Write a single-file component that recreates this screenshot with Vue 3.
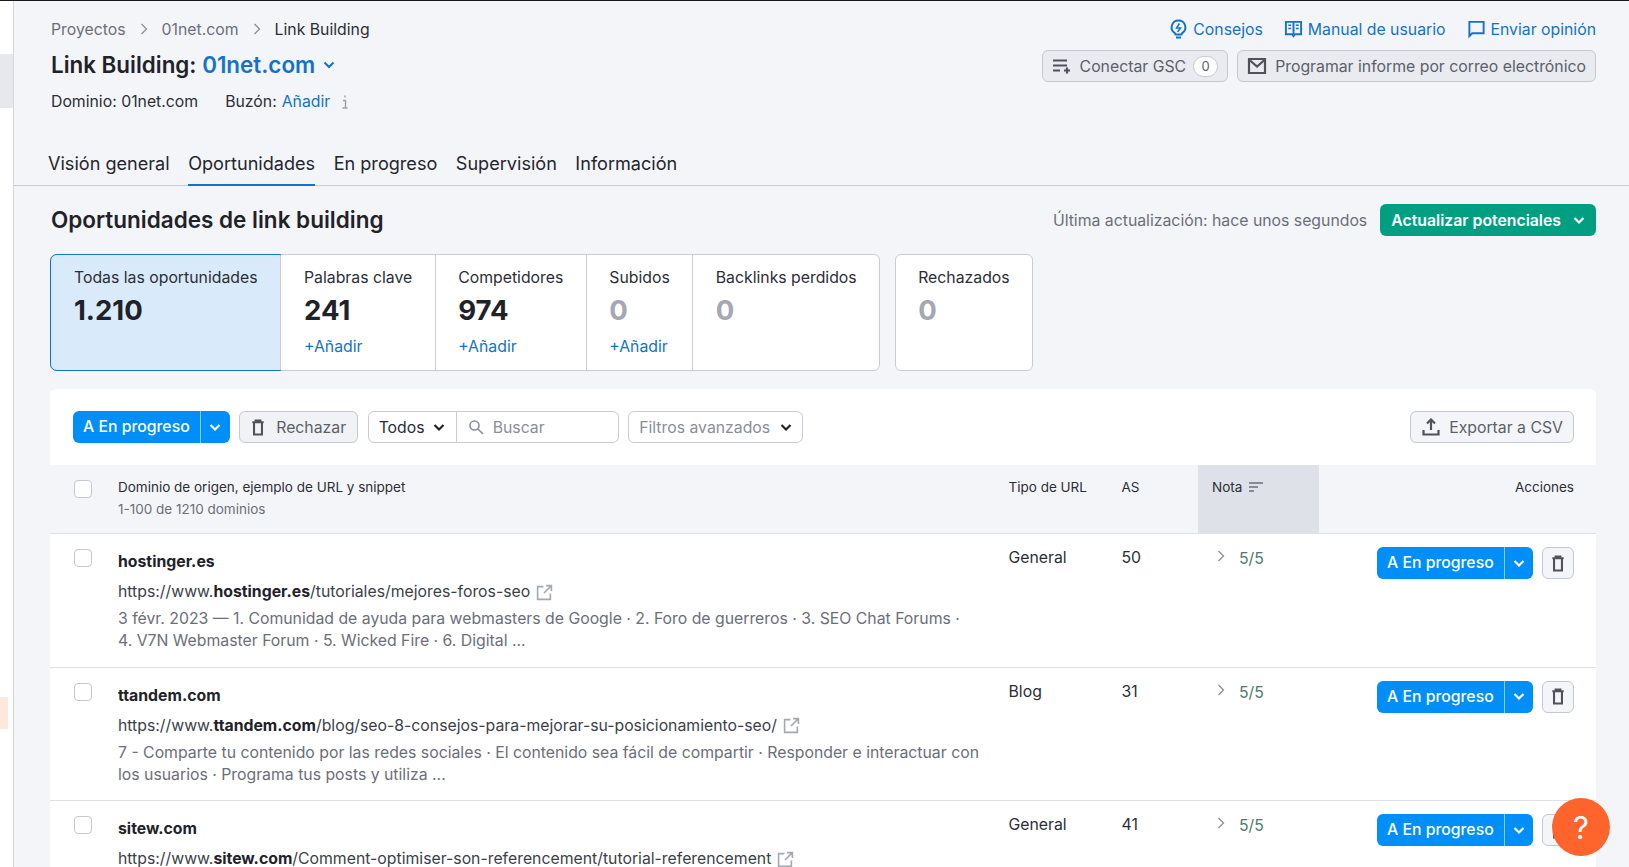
<script setup>
const rows = [
  { name: 'hostinger.es', pre: 'https://www.', bold: 'hostinger.es', post: '/tutoriales/mejores-foros-seo', lines: ['3 févr. 2023 — 1. Comunidad de ayuda para webmasters de Google · 2. Foro de guerreros · 3. SEO Chat Forums ·', '4. V7N Webmaster Forum · 5. Wicked Fire · 6. Digital ...'], type: 'General', as: 50 },
  { name: 'ttandem.com', pre: 'https://www.', bold: 'ttandem.com', post: '/blog/seo-8-consejos-para-mejorar-su-posicionamiento-seo/', lines: ['7 - Comparte tu contenido por las redes sociales · El contenido sea fácil de compartir · Responder e interactuar con', 'los usuarios · Programa tus posts y utiliza ...'], type: 'Blog', as: 31 },
  { name: 'sitew.com', pre: 'https://www.', bold: 'sitew.com', post: '/Comment-optimiser-son-referencement/tutorial-referencement', lines: [], type: 'General', as: 41 },
]
const tabs = ['Visión general', 'Oportunidades', 'En progreso', 'Supervisión', 'Información']
const cards = [
  { label: 'Todas las oportunidades', value: '1.210', active: true },
  { label: 'Palabras clave', value: '241', add: true },
  { label: 'Competidores', value: '974', add: true },
  { label: 'Subidos', value: '0', add: true, zero: true },
  { label: 'Backlinks perdidos', value: '0', zero: true },
]
</script>

<template>
  <div class="page">
    <aside class="rail">
      <div class="rail-block"></div>
      <div class="rail-mark"></div>
    </aside>
    <main class="main">
      <header class="head">
        <div class="head-top">
          <div>
            <nav class="crumbs">
              <span>Proyectos</span>
              <svg class="crumb-sep" viewBox="0 0 8 12"><path d="M1.5 1l5 5-5 5" /></svg>
              <span>01net.com</span>
              <svg class="crumb-sep" viewBox="0 0 8 12"><path d="M1.5 1l5 5-5 5" /></svg>
              <span class="crumb-cur">Link Building</span>
            </nav>
            <h1 class="title">Link Building: <span class="title-link">01net.com</span>
              <svg class="title-caret" viewBox="0 0 12 8"><path d="M1.5 1.5L6 6l4.5-4.5" /></svg>
            </h1>
            <div class="meta">
              <span>Dominio: 01net.com</span>
              <span class="meta-box">Buzón: <a class="link">Añadir</a>
                <svg class="info" viewBox="0 0 8 16"><path d="M4 1.5v2M2 6.5h2.5v7M1.5 14h5" /></svg>
              </span>
            </div>
          </div>
          <div class="head-right">
            <div class="help-links">
              <a class="help-link">
                <svg viewBox="0 0 18 20" class="ico-link"><path d="M9 1.5a6.8 6.8 0 0 0-3.6 12.6l.6 1.4h6l.6-1.4A6.8 6.8 0 0 0 9 1.5z" /><path d="M6.5 18.5h5" /><path class="thin" d="M10 4.5L7 9h4l-3 4" /></svg>
                Consejos
              </a>
              <a class="help-link">
                <svg viewBox="0 0 20 20" class="ico-link"><path d="M2 2.5h16v13h-6.5L10 17.5l-1.5-2H2z" /><path d="M10 3v12.5" /><path class="thin" d="M4.5 6h3M4.5 9.5h3M12.5 6h3M12.5 9.5h3" /></svg>
                Manual de usuario
              </a>
              <a class="help-link">
                <svg viewBox="0 0 20 20" class="ico-link"><path d="M2.5 17.5v-15h15v12h-12z" /></svg>
                Enviar opinión
              </a>
            </div>
            <div class="head-btns">
              <button class="btn btn-head">
                <svg viewBox="0 0 20 16" class="ico"><path d="M1 2.5h14M1 7.5h14M1 12.5h7M15 9.5v6M12 12.5h6" /></svg>
                Conectar GSC <span class="pill">0</span>
              </button>
              <button class="btn btn-head">
                <svg viewBox="0 0 20 18" class="ico"><path d="M2 2h16v14H2zM2.5 3l7.5 6.5L17.5 3" /></svg>
                Programar informe por correo electrónico
              </button>
            </div>
          </div>
        </div>
        <div class="tabs">
          <a v-for="t in tabs" :key="t" class="tab" :class="{ on: t === 'Oportunidades' }">{{ t }}</a>
        </div>
      </header>

      <section class="content">
        <div class="sec-head">
          <h2 class="sec-title">Oportunidades de link building</h2>
          <div class="sec-right">
            <span class="updated">Última actualización: hace unos segundos</span>
            <button class="btn-green">Actualizar potenciales
              <svg class="caret-w" viewBox="0 0 12 8"><path d="M1.5 1.5L6 6l4.5-4.5" /></svg>
            </button>
          </div>
        </div>

        <div class="cards">
          <div class="card-group">
            <div v-for="c in cards" :key="c.label" class="card" :class="{ active: c.active }">
              <div class="card-label">{{ c.label }}</div>
              <div class="card-value" :class="{ zero: c.zero }">{{ c.value }}</div>
              <a v-if="c.add" class="card-add">+Añadir</a>
            </div>
          </div>
          <div class="card-group solo">
            <div class="card">
              <div class="card-label">Rechazados</div>
              <div class="card-value zero">0</div>
            </div>
          </div>
        </div>

        <div class="panel">
          <div class="toolbar">
            <div class="split">
              <span class="split-main">A En progreso</span>
              <span class="split-caret"><svg class="caret-w" viewBox="0 0 12 8"><path d="M1.5 1.5L6 6l4.5-4.5" /></svg></span>
            </div>
            <button class="btn btn-reject">
              <svg viewBox="0 0 14 18" class="ico-trash"><path d="M1 3.5h12M4.5 3V1.5h5V3M2.8 3.5v13h8.4v-13" /></svg>
              Rechazar
            </button>
            <div class="search-group">
              <span class="sel">Todos <svg class="caret-d" viewBox="0 0 12 8"><path d="M1.5 1.5L6 6l4.5-4.5" /></svg></span>
              <span class="search">
                <svg viewBox="0 0 16 16" class="ico-search"><circle cx="6.5" cy="6.5" r="4.5" /><path d="M10 10l5 5" /></svg>
                Buscar
              </span>
            </div>
            <span class="filter">Filtros avanzados <svg class="caret-d" viewBox="0 0 12 8"><path d="M1.5 1.5L6 6l4.5-4.5" /></svg></span>
            <button class="btn btn-export">
              <svg viewBox="0 0 18 18" class="ico"><path d="M9 12V2M5 5.5L9 1.5l4 4M1.5 12v4.5h15V12" /></svg>
              Exportar a CSV
            </button>
          </div>

          <div class="t-row t-head">
            <div class="c-check"><span class="check"></span></div>
            <div class="c-main">
              <div>Dominio de origen, ejemplo de URL y snippet</div>
              <div class="t-sub">1-100 de 1210 dominios</div>
            </div>
            <div class="c-type">Tipo de URL</div>
            <div class="c-as">AS</div>
            <div class="c-note sorted">Nota
              <svg viewBox="0 0 14 10" class="ico-sort"><path d="M0 1h14M0 5h9M0 9h5" /></svg>
            </div>
            <div class="c-act">Acciones</div>
          </div>

          <div v-for="r in rows" :key="r.name" class="t-row t-body">
            <div class="c-check"><span class="check"></span></div>
            <div class="c-main">
              <div class="r-name">{{ r.name }}</div>
              <div class="r-url">{{ r.pre }}<b>{{ r.bold }}</b>{{ r.post }}
                <svg viewBox="0 0 16 16" class="ico-ext"><path d="M7 2.5H1.5v12h12V9M9.5 1.5h5v5M14 2L7.5 8.5" /></svg>
              </div>
              <div v-for="l in r.lines" :key="l" class="r-snip">{{ l }}</div>
            </div>
            <div class="c-type r-cell">{{ r.type }}</div>
            <div class="c-as r-cell">{{ r.as }}</div>
            <div class="c-note r-note">
              <svg viewBox="0 0 8 12" class="note-arrow"><path d="M1.5 1l5 5-5 5" /></svg>
              <span>5/5</span>
            </div>
            <div class="c-act r-act">
              <div class="split split-row">
                <span class="split-main">A En progreso</span>
                <span class="split-caret"><svg class="caret-w" viewBox="0 0 12 8"><path d="M1.5 1.5L6 6l4.5-4.5" /></svg></span>
              </div>
              <button class="btn btn-trash">
                <svg viewBox="0 0 14 18" class="ico-trash"><path d="M1 3.5h12M4.5 3V1.5h5V3M2.8 3.5v13h8.4v-13" /></svg>
              </button>
            </div>
          </div>
        </div>
      </section>
    </main>
    <div class="help-fab">?</div>
  </div>
</template>

<style>
html, body { margin: 0; height: 100%; overflow: hidden; background: #f4f5f9; }
</style>

<style scoped>
* { box-sizing: border-box; }
.page {
  display: flex; height: 867px; overflow: hidden; position: relative;
  border-top: 1px solid #1a1a1a;
  font-family: Inter, "Liberation Sans", sans-serif; font-size: 15.8px; color: #1f2229; background: #f4f5f9;
}
.rail { width: 14px; flex: none; background: #fff; border-right: 1px solid #d5d7de; padding-top: 53px; }
.rail-block { height: 54px; background: #e6e8ee; }
.rail-mark { width: 8px; height: 32px; margin-top: 589px; background: #ffe9dd; }
.main { flex: 1; min-width: 0; }
.head { border-bottom: 1px solid #c9ccd4; height: 185px; position: relative; padding: 0 33px 0 37px; }
.head-top { display: flex; justify-content: space-between; }
.crumbs { display: flex; align-items: center; height: 20px; margin-top: 18px; color: #6c6e79; }
.crumb-sep { width: 8px; height: 12px; margin: 0 14px; fill: none; stroke: #8b8e99; stroke-width: 1.3; }
.crumb-cur { color: #2c2e36; }
.title { margin: 11px 0 0; font-size: 22.4px; line-height: 30px; font-weight: 600; display: flex; align-items: center; white-space: pre; }
.title-link { color: #1273c9; }
.title-caret { width: 12px; height: 8px; margin-left: 8px; fill: none; stroke: #1273c9; stroke-width: 2; }
.meta { display: flex; gap: 27px; margin-top: 11px; line-height: 22px; color: #2c2e36; }
.meta-box { display: flex; align-items: center; gap: 5px; }
.link { color: #1273c9; }
.info { width: 8px; height: 16px; margin-left: 6px; fill: none; stroke: #9da0aa; stroke-width: 1.4; }
.head-right { display: flex; flex-direction: column; align-items: flex-end; }
.help-links { display: flex; gap: 21px; margin-top: 18px; height: 20px; }
.help-link { display: flex; align-items: center; gap: 5px; color: #1273c9; white-space: nowrap; }
.ico-link { width: 19px; height: 20px; fill: none; stroke: #1273c9; stroke-width: 2; }
.ico-link .thin { stroke-width: 1.5; }
.head-btns { display: flex; gap: 9px; margin-top: 11px; }
.btn { display: inline-flex; align-items: center; font: inherit; border-radius: 6px; border: 1px solid #c5c8d0; background: #f4f5f9; color: #5c5f6a; white-space: nowrap; padding: 0; }
.btn-head { height: 32px; background: #e9ebf0; padding: 0 9px; gap: 8px; }
.ico { width: 20px; height: 18px; fill: none; stroke: #4f525d; stroke-width: 2.2; }
.pill { width: 25px; height: 21px; border-radius: 11px; background: #fff; border: 1px solid #c5c8d0; font-size: 13px; display: inline-flex; align-items: center; justify-content: center; margin-left: -1px; }
.tabs { position: absolute; left: 34px; bottom: -1px; display: flex; gap: 18.5px; }
.tab { height: 38px; font-size: 18.1px; line-height: 30px; border-bottom: 2.5px solid transparent; color: #24262e; white-space: nowrap; }
.tab.on { border-bottom-color: #1273c9; }
.content { padding: 0 33px 0 36px; }
.sec-head { display: flex; justify-content: space-between; align-items: center; margin-top: 18px; height: 32px; }
.sec-title { margin: -1px 0 0 1px; font-size: 22.5px; font-weight: 600; color: #1f2229; }
.sec-right { display: flex; align-items: center; gap: 13px; }
.updated { color: #6c6e79; }
.btn-green { height: 32px; border: 0; border-radius: 6px; background: #009f81; color: #fff; font: 600 15.8px Inter, sans-serif; padding: 0 11px; display: inline-flex; align-items: center; gap: 12px; }
.caret-w { width: 12px; height: 9px; fill: none; stroke: #fff; stroke-width: 2.2; }
.caret-d { width: 12px; height: 9px; fill: none; stroke: #1f2229; stroke-width: 2.2; }
.cards { display: flex; gap: 14.5px; margin-top: 18px; }
.card-group { display: flex; height: 117px; background: #fff; border: 1px solid #c9ccd4; border-radius: 6px; }
.card { padding: 13px 22.5px 0; border-left: 1px solid #c9ccd4; }
.card:first-child { border-left: 0; }
.card.active { background: #d9ebfa; outline: 1px solid #1273c9; outline-offset: 0; border-radius: 6px 0 0 6px; padding-left: 23px; padding-right: 23px; }
.card-label { line-height: 20px; color: #2c2e36; white-space: nowrap; }
.card-value { margin-top: 5px; font-size: 27.5px; line-height: 34px; font-weight: 700; color: #1f2229; }
.card-value.zero { color: #a5a8b2; }
.card-add { display: block; margin-top: 10px; color: #1273c9; line-height: 20px; }
.panel { margin-top: 18px; background: #fff; border-radius: 6px 6px 0 0; }
.toolbar { display: flex; align-items: center; height: 76px; padding: 0 22px 0 23px; gap: 9.5px; }
.split { display: inline-flex; height: 32px; background: #008ff8; color: #fff; border-radius: 6px; font-weight: 500; align-items: center; }
.split-main { padding: 0 10px; line-height: 32px; white-space: nowrap; }
.split-caret { width: 30px; height: 32px; border-left: 1px solid #8cc9f6; display: flex; align-items: center; justify-content: center; }
.btn-reject { height: 32px; padding: 0 11px; gap: 11px; background: #f1f2f5; }
.ico-trash { width: 14px; height: 17px; fill: none; stroke: #4f525d; stroke-width: 2.2; }
.search-group { display: flex; height: 32px; border: 1px solid #c9ccd4; border-radius: 6px; }
.sel { display: flex; align-items: center; gap: 8px; width: 88px; padding: 0 10px; border-right: 1px solid #c9ccd4; color: #2c2e36; }
.search { display: flex; align-items: center; gap: 9px; width: 161px; padding: 0 11px; color: #8b8e99; }
.ico-search { width: 16px; height: 16px; fill: none; stroke: #8b8e99; stroke-width: 1.6; }
.filter { display: flex; align-items: center; gap: 10px; height: 32px; padding: 0 10px; border: 1px solid #c9ccd4; border-radius: 6px; color: #8b8e99; white-space: nowrap; }
.btn-export { height: 32px; padding: 0 10px; margin-left: auto; gap: 8px; background: #f4f5f9; }
.t-row { display: flex; }
.t-head { height: 69px; background: #f4f5f9; border-bottom: 1px solid #dfe1e7; font-size: 13.5px; color: #2c2e36; }
.t-head > div { padding-top: 14px; line-height: 16px; }
.t-head > .c-check { padding-top: 15px; }
.t-sub { margin-top: 6px; color: #6c6e79; }
.c-check { width: 68px; flex: none; padding-left: 24px; }
.c-main { width: 890.5px; flex: none; }
.c-type { width: 113px; flex: none; }
.c-as { width: 76.5px; flex: none; }
.c-note { width: 121px; flex: none; padding-left: 14px; }
.c-act { flex: 1; padding-right: 22px; text-align: right; }
.sorted { background: #dfe1e8; display: flex; gap: 7px; }
.ico-sort { width: 14px; height: 10px; margin-top: 3px; fill: none; stroke: #6c6e79; stroke-width: 1.6; }
.t-body { height: 133.5px; border-bottom: 1px solid #dfe1e7; background: #fff; }
.t-body > .c-check { padding-top: 15px; }
.check { display: block; width: 18px; height: 18px; border: 1px solid #c5c8d0; border-radius: 4px; background: #fff; }
.t-body > .c-main { padding-top: 18px; }
.r-name { font-weight: 700; line-height: 20px; color: #1f2229; }
.r-url { margin-top: 9px; line-height: 22px; color: #3c3f48; white-space: nowrap; display: flex; align-items: center; }
.r-url b { font-weight: 700; color: #1f2229; white-space: pre; }
.ico-ext { width: 17px; height: 17px; margin-left: 6px; fill: none; stroke: #a5a8b2; stroke-width: 1.5; }
.r-snip { line-height: 22px; color: #6c6e79; white-space: nowrap; }
.r-url + .r-snip { margin-top: 5px; }
.r-cell { padding-top: 14px; line-height: 20px; color: #2c2e36; }
.r-note { padding-top: 15px; line-height: 20px; color: #4f7a6c; display: flex; gap: 14px; padding-left: 19px; }
.note-arrow { width: 8px; height: 12px; margin-top: 1px; fill: none; stroke: #8b8e99; stroke-width: 1.3; }
.r-act { display: flex; justify-content: flex-end; gap: 9px; padding-top: 13px; }
.split-row { width: 156px; height: 32px; }
.split-row .split-main { flex: 1; text-align: center; }
.btn-trash { width: 32px; height: 32px; justify-content: center; background: #f4f5f9; }
.help-fab { position: absolute; left: 1552px; top: 797px; width: 58px; height: 58px; border-radius: 50%; background: #ff642d; color: #fff; font-size: 31px; font-weight: 400; display: flex; align-items: center; justify-content: center; }
</style>
